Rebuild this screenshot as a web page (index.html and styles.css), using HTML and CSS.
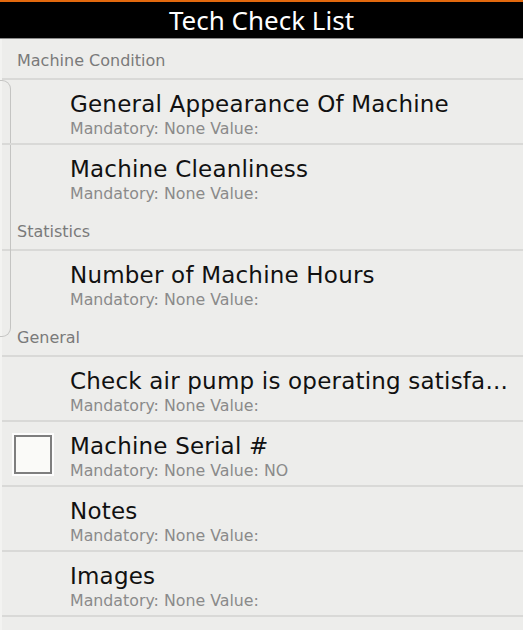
FILE: index.html
```html
<!DOCTYPE html>
<html>
<head>
<meta charset="utf-8">
<link rel="stylesheet" href="styles.css">
</head>
<body>
<div class="app">
  <header class="header"><h1 class="title">Tech Check List</h1></header>
  <div class="list">
    <div class="bracket"></div>
    <div class="section">Machine Condition</div>
    <div class="item divided">
      <div class="text"><div class="name">General Appearance Of Machine</div><div class="meta">Mandatory: None Value:</div></div>
    </div>
    <div class="item">
      <div class="text"><div class="name">Machine Cleanliness</div><div class="meta">Mandatory: None Value:</div></div>
    </div>
    <div class="section">Statistics</div>
    <div class="item">
      <div class="text"><div class="name">Number of Machine Hours</div><div class="meta">Mandatory: None Value:</div></div>
    </div>
    <div class="section">General</div>
    <div class="item divided">
      <div class="text"><div class="name">Check air pump is operating satisfa...</div><div class="meta">Mandatory: None Value:</div></div>
    </div>
    <div class="item divided">
      <div class="check"><span class="box"></span></div>
      <div class="text"><div class="name">Machine Serial #</div><div class="meta">Mandatory: None Value: NO</div></div>
    </div>
    <div class="item divided">
      <div class="text"><div class="name">Notes</div><div class="meta">Mandatory: None Value:</div></div>
    </div>
    <div class="item divided">
      <div class="text"><div class="name">Images</div><div class="meta">Mandatory: None Value:</div></div>
    </div>
    <div class="item">
      <div class="text"><div class="name">Camera Check</div><div class="meta">Mandatory: None Value:</div></div>
    </div>
  </div>
</div>
</body>
</html>
```
FILE: styles.css
```css
html, body {
  margin: 0;
  padding: 0;
  background: #ededeb;
}
body {
  font-family: "DejaVu Sans", "Noto Sans", sans-serif;
}
.app {
  width: 523px;
  height: 630px;
  overflow: hidden;
  display: flex;
  flex-direction: column;
  background: #ededeb;
}
.header {
  flex: none;
  height: 36px;
  background: #000;
  border-top: 2px solid #e2690e;
  border-bottom: 1px solid #8c8c8c;
  display: flex;
  align-items: center;
  justify-content: center;
}
.title {
  margin: 0;
  font-family: "Noto Sans", "DejaVu Sans", sans-serif;
  font-size: 26px;
  font-weight: normal;
  color: #fff;
  line-height: 30px;
}
.list {
  position: relative;
  flex: 1;
  display: flex;
  flex-direction: column;
  border-left: 2px solid #f3f3f1;
}
.bracket {
  position: absolute;
  left: -2px;
  top: 41px;
  width: 10px;
  height: 255px;
  border: 1px solid #c4c4c2;
  border-left: none;
  border-radius: 0 9px 9px 0;
}
.section {
  flex: none;
  height: 41px;
  box-sizing: border-box;
  padding-left: 15px;
  padding-top: 3px;
  display: flex;
  align-items: center;
  font-size: 16px;
  color: #7a7a7a;
  border-bottom: 2px solid #d9d9d7;
}
.item {
  flex: none;
  height: 65px;
  box-sizing: border-box;
  display: flex;
  padding-left: 68px;
  position: relative;
}
.item.divided {
  border-bottom: 2px solid #d9d9d7;
}
.text {
  padding-top: 11px;
}
.name {
  font-size: 23px;
  line-height: 26px;
  letter-spacing: 0.2px;
  color: #111;
  white-space: nowrap;
}
.meta {
  font-size: 15.8px;
  line-height: 20px;
  margin-top: 2px;
  color: #8a8a8a;
  white-space: nowrap;
}
.check {
  position: absolute;
  left: 10px;
  top: 11px;
  width: 42px;
  height: 43px;
  background: #fcfcfc;
  display: flex;
  align-items: center;
  justify-content: center;
}
.box {
  width: 34px;
  height: 35px;
  border: 2px solid #7e7e7e;
  background: #fafaf8;
}
```
